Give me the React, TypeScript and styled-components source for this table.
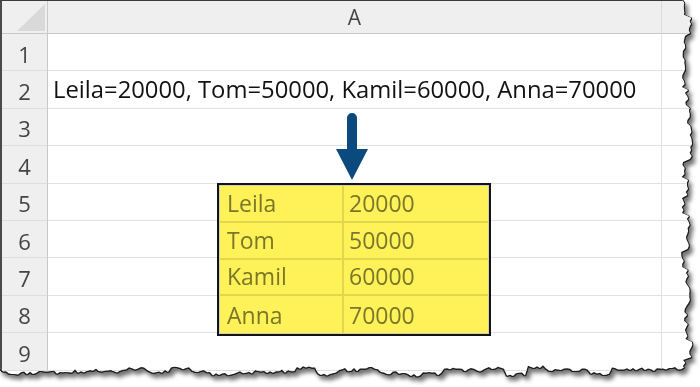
import { Fragment, useMemo } from 'react'
import styled, { createGlobalStyle } from 'styled-components'

const GlobalStyle = createGlobalStyle`
    html, body {
        margin: 0;
        padding: 0;
        background: #ffffff;
        overflow: hidden;
    }
    #root {
        width: 700px;
        height: 387px;
    }
`

const ROW_H = 37.4
const HEAD_H = 34

// jagged torn-paper outline for the right and bottom edges
function seeded(seed: number) {
    let s = seed
    return () => {
        s = (s * 16807) % 2147483647
        return (s - 1) / 2147483646
    }
}

function tornPolygon() {
    const rnd = seeded(41)
    const pts: string[] = ['0px 0px']
    let wave = 0
    // right edge, top to bottom
    for (let y = 0; y <= 368; y += 3) {
        if (y % 18 === 0) wave = (rnd() - 0.5) * 9
        const x = 687 + wave + (rnd() - 0.5) * 3.5
        pts.push(`${x.toFixed(1)}px ${y}px`)
    }
    // bottom edge, right to left
    for (let x = 684; x >= 0; x -= 3) {
        if (x % 21 === 0) wave = (rnd() - 0.5) * 8
        const y = 371 + wave + (rnd() - 0.5) * 3.5
        pts.push(`${x}px ${y.toFixed(1)}px`)
    }
    pts.push('0px 372px')
    return `polygon(${pts.join(', ')})`
}

const Page = styled.div`
    width: 700px;
    height: 387px;
    filter: drop-shadow(1px 0 0 #1e1e1e) drop-shadow(0 1px 0 #1e1e1e)
        drop-shadow(-1px 0 0 #1e1e1e) drop-shadow(3px 4px 2px rgba(0, 0, 0, 0.55));
`

const Sheet = styled.div`
    position: relative;
    width: 700px;
    height: 387px;
    background: #ffffff;
    box-sizing: border-box;
    border-top: 1px solid #3a3a3a;
    border-left: 2px solid #4a4a4a;
    display: grid;
    grid-template-columns: 46px 614px 1fr;
    grid-template-rows: ${HEAD_H - 1}px repeat(9, ${ROW_H}px);
    font-family: 'Open Sans', 'Noto Sans', sans-serif;
`

const Corner = styled.div`
    background: #efefef;
    border-right: 1px solid #c8c8c8;
    border-bottom: 1px solid #c8c8c8;
    position: relative;
    svg {
        position: absolute;
        right: 2px;
        bottom: 2px;
    }
`

const ColHead = styled.div`
    background: #efefef;
    border-bottom: 1px solid #c8c8c8;
    border-right: 1px solid #dadada;
    display: flex;
    align-items: center;
    justify-content: center;
    color: #444444;
    font-size: 21px;
`

const RowHead = styled.div`
    background: #efefef;
    border-right: 1px solid #c8c8c8;
    border-bottom: 1px solid #dedede;
    display: flex;
    align-items: center;
    justify-content: center;
    padding-top: 3px;
    box-sizing: border-box;
    color: #444444;
    font-size: 22px;
`

const Cell = styled.div<{ $last?: boolean }>`
    border-bottom: 1px solid #e1e1e1;
    border-right: ${(p) => (p.$last ? 'none' : '1px solid #e1e1e1')};
    display: flex;
    align-items: flex-end;
    padding: 0 0 3px 5px;
    box-sizing: border-box;
    white-space: nowrap;
    color: #111111;
    font-size: 23.8px;
`

const Arrow = styled.svg`
    position: absolute;
    left: 332px;
    top: 111px;
`

const DataBox = styled.div`
    position: absolute;
    left: 215px;
    top: 182px;
    width: 274px;
    height: 153px;
    box-sizing: border-box;
    border: 2px solid #141414;
    box-shadow: inset 0 0 0 1px #cfcfb8;
    background: #fff258;
    display: grid;
    grid-template-columns: 124px 1fr;
    grid-template-rows: repeat(4, 1fr);
    padding: 1px;
`

const DataCell = styled.div<{ $col: number; $last: boolean }>`
    display: flex;
    align-items: flex-end;
    padding: 0 0 2px ${(p) => (p.$col === 0 ? 7 : 5)}px;
    border-right: ${(p) => (p.$col === 0 ? '2px solid #e3d64c' : 'none')};
    border-bottom: ${(p) => (p.$last ? 'none' : '2px solid #e3d64c')};
    color: #7a772a;
    font-size: 23px;
`

const people = [
    ['Leila', '20000'],
    ['Tom', '50000'],
    ['Kamil', '60000'],
    ['Anna', '70000'],
]

export default function App() {
    const clip = useMemo(() => tornPolygon(), [])
    const rows = [1, 2, 3, 4, 5, 6, 7, 8, 9]

    return (
        <>
            <GlobalStyle />
            <Page>
                <Sheet style={{ clipPath: clip }}>
                    <Corner>
                        <svg width="28" height="27" viewBox="0 0 28 27">
                            <polygon points="28,0 28,27 0,27" fill="#d9d9d9" />
                        </svg>
                    </Corner>
                    <ColHead>A</ColHead>
                    <ColHead />
                    {rows.map((r) => (
                        <Fragment key={r}>
                            <RowHead>{r}</RowHead>
                            <Cell>
                                {r === 2 ? 'Leila=20000, Tom=50000, Kamil=60000, Anna=70000' : ''}
                            </Cell>
                            <Cell $last />
                        </Fragment>
                    ))}

                    <Arrow width="36" height="70" viewBox="0 0 36 70">
                        <path
                            d="M13 6 a5 5 0 0 1 10 0 V37 H34 L18 68 L2 37 H13 Z"
                            fill="#0b4a7e"
                        />
                    </Arrow>

                    <DataBox>
                        {people.map(([name, amount], i) => (
                            <Fragment key={name}>
                                <DataCell $col={0} $last={i === 3}>
                                    {name}
                                </DataCell>
                                <DataCell $col={1} $last={i === 3}>
                                    {amount}
                                </DataCell>
                            </Fragment>
                        ))}
                    </DataBox>
                </Sheet>
            </Page>
        </>
    )
}
